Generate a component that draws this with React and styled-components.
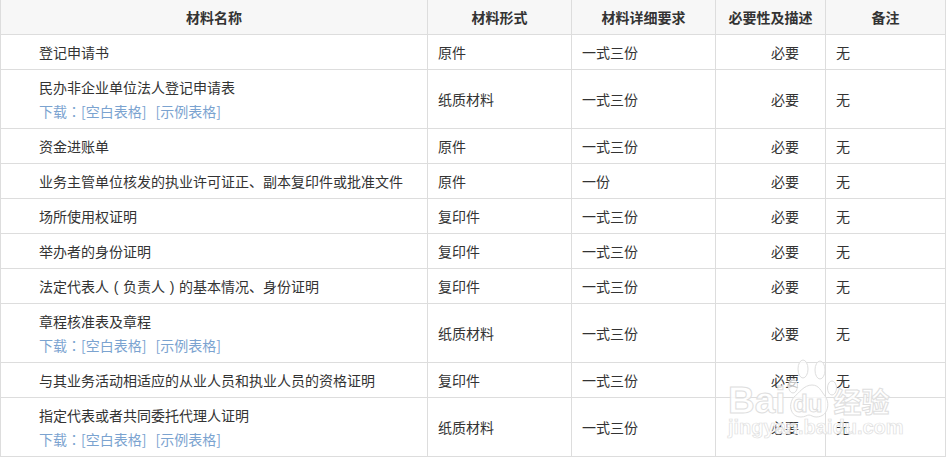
import React from 'react';
import styled, { createGlobalStyle } from 'styled-components';

const GlobalStyle = createGlobalStyle`
  html, body {
    margin: 0;
    padding: 0;
    background: #fff;
  }
`;

const Page = styled.div`
  position: relative;
  width: 950px;
  height: 461px;
  overflow: hidden;
  font-family: "Noto Sans CJK SC", "Liberation Sans", sans-serif;
  font-size: 14px;
  color: #333;
`;

const Table = styled.table`
  width: 946px;
  margin-top: -1px;
  border-collapse: collapse;
  table-layout: fixed;
`;

const HeadCell = styled.th`
  height: 34px;
  padding: 0;
  border: 1px solid #ddd;
  background: #f7f7f7;
  font-weight: 700;
  text-align: center;
  color: #333;
`;

const Cell = styled.td`
  padding: 0 0 0 ${(p) => p.$pad || 10}px;
  border: 1px solid #ddd;
  line-height: 24px;
  white-space: nowrap;
`;

const Row = styled.tr`
  height: ${(p) => (p.$tall ? 59 : 35)}px;
`;

// centred full-width colon, as the original font draws it
const Punct = styled.span`
  font-family: "Noto Sans CJK TC", sans-serif;
`;

const Paren = styled.span`
  display: inline-block;
  width: 14px;
  text-align: center;
  font-family: "Liberation Sans", sans-serif;
`;

const Download = styled.div`
  display: flex;
  gap: 9px;
  color: #7ba3d0;
`;

const Watermark = styled.div`
  position: absolute;
  left: 728px;
  top: 358px;
  width: 200px;
  height: 96px;
  pointer-events: none;
`;

const Brand = styled.div`
  position: absolute;
  left: 0;
  top: 23px;
  display: flex;
  align-items: baseline;
  font-family: "Liberation Sans", sans-serif;
  font-size: 37px;
  font-weight: 700;
  line-height: 40px;
  color: rgba(255, 255, 255, 0.85);
  -webkit-text-stroke: 1px #dedede;
`;

const BrandDu = styled.span`
  position: absolute;
  left: 65px;
  top: 3px;
  font-size: 24px;
`;

const BrandCn = styled.span`
  margin-left: 48px;
  font-family: "Noto Sans CJK SC", sans-serif;
  font-size: 28px;
`;

const Site = styled.div`
  position: absolute;
  left: 0;
  top: 57px;
  font-family: "Liberation Sans", sans-serif;
  font-size: 20px;
  font-weight: 700;
  line-height: 24px;
  color: rgba(255, 255, 255, 0.85);
  -webkit-text-stroke: 0.7px #dedede;
  white-space: nowrap;
`;

const Paw = styled.svg`
  position: absolute;
  left: 60px;
  top: 0;
`;

const widths = [427, 144, 144, 110, 120];
const heads = ['材料名称', '材料形式', '材料详细要求', '必要性及描述', '备注'];

const rows = [
  ['登记申请书', '原件', '一式三份'],
  ['民办非企业单位法人登记申请表', '纸质材料', '一式三份', true],
  ['资金进账单', '原件', '一式三份'],
  ['业务主管单位核发的执业许可证正、副本复印件或批准文件', '原件', '一份'],
  ['场所使用权证明', '复印件', '一式三份'],
  ['举办者的身份证明', '复印件', '一式三份'],
  ['法定代表人（负责人）的基本情况、身份证明', '复印件', '一式三份'],
  ['章程核准表及章程', '纸质材料', '一式三份', true],
  ['与其业务活动相适应的从业人员和执业人员的资格证明', '复印件', '一式三份'],
  ['指定代表或者共同委托代理人证明', '纸质材料', '一式三份', true],
];

const withParens = (text) =>
  text.split(/([（）])/).map((part, i) =>
    part === '（' || part === '）' ? <Paren key={i}>{part === '（' ? '(' : ')'}</Paren> : part
  );

const App = () => {
  return (
    <Page>
      <GlobalStyle />
      <Table>
        <colgroup>
          {widths.map((w, i) => (
            <col key={i} width={w} />
          ))}
        </colgroup>
        <thead>
          <tr>
            {heads.map((label) => (
              <HeadCell key={label}>{label}</HeadCell>
            ))}
          </tr>
        </thead>
        <tbody>
          {rows.map(([name, form, detail, tall]) => (
            <Row key={name} $tall={tall}>
              <Cell $pad={38}>
                {withParens(name)}
                {tall && (
                  <Download>
                    <span>
                      下载<Punct>：</Punct>[空白表格]
                    </span>
                    <span>[示例表格]</span>
                  </Download>
                )}
              </Cell>
              <Cell>{form}</Cell>
              <Cell>{detail}</Cell>
              <Cell $pad={55}>必要</Cell>
              <Cell>无</Cell>
            </Row>
          ))}
        </tbody>
      </Table>
      <Watermark>
        <Paw width="52" height="62" viewBox="0 0 52 62">
          <g fill="rgba(255,255,255,0.7)" stroke="#dedede" strokeWidth="1">
            <ellipse cx="15" cy="11" rx="5" ry="9" />
            <ellipse cx="32" cy="12" rx="5" ry="9" />
            <ellipse cx="5" cy="28" rx="4.5" ry="7" />
            <ellipse cx="44" cy="30" rx="4.5" ry="7" />
            <path d="M24 27c7 0 9 6 13 11 5 6 4 21-9 21-3 0-5-2-7-2s-4 2-8 2C2 59 0 46 6 39c5-4 10-12 18-12z" />
          </g>
        </Paw>
        <Brand>
          Bai
          <BrandDu>du</BrandDu>
          <BrandCn>经验</BrandCn>
        </Brand>
        <Site>jingyan.baidu.com</Site>
      </Watermark>
    </Page>
  );
};

export default App;
